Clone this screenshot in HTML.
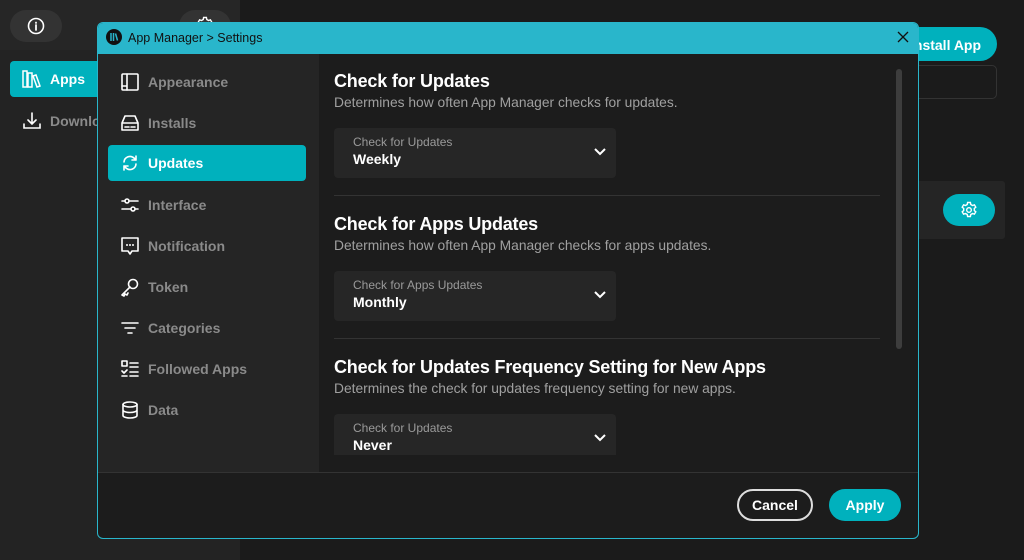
<!DOCTYPE html>
<html><head><style>
*{box-sizing:border-box;margin:0;padding:0}
body{width:1024px;height:560px;background:#1b1b1b;font-family:"Liberation Sans",sans-serif;position:relative;overflow:hidden;color:#fff}
.abs{position:absolute}
.nav{position:absolute;left:108px;width:198px;height:36px;display:flex;align-items:center;padding-left:12px;font-weight:bold;font-size:14px;color:#8a8a8a;border-radius:4px}
.nav svg{width:20px;height:20px;margin-right:8px;fill:none;stroke:#fff;stroke-width:1.6;stroke-linecap:round;stroke-linejoin:round}
.nav.act{background:#00b1bd;color:#fff}
h2{position:absolute;left:334px;font-size:18px;font-weight:bold;color:#fff;letter-spacing:-0.2px}
.desc{position:absolute;left:334px;font-size:13.8px;color:#a0a0a0}
.sel{position:absolute;left:334px;width:282px;height:50px;background:#262626;border-radius:4px}
.sel .l{position:absolute;left:19px;top:7px;font-size:12px;color:#9a9a9a}
.sel .v{position:absolute;left:19px;top:23px;font-size:14px;font-weight:bold;color:#fff}
.sel svg{position:absolute;right:10px;top:19px;width:12px;height:10px}
.hr{position:absolute;left:318px;width:562px;height:1px;background:#333}
</style></head><body>
<div class="abs" style="left:0;top:0;width:240px;height:560px;background:#232323"></div>
<div class="abs" style="left:0;top:0;width:240px;height:50px;background:#262626"></div>
<div class="abs" style="left:10px;top:10px;width:52px;height:32px;border-radius:16px;background:#333"></div>
<svg class="abs" style="left:27px;top:17px" width="18" height="18" viewBox="0 0 18 18"><circle cx="9" cy="9" r="7.5" fill="none" stroke="#fff" stroke-width="1.6"/><path d="M9 8v5M9 5.5v.5" stroke="#fff" stroke-width="1.8" stroke-linecap="round"/></svg>
<div class="abs" style="left:179px;top:10px;width:52px;height:32px;border-radius:16px;background:#333"></div>
<svg class="abs" style="left:196px;top:16px" width="18" height="18" viewBox="0 0 18 18" fill="none" stroke="#fff" stroke-width="1.4"><circle cx="9" cy="9" r="2.3"/><path d="M7.6 1.5h2.8l.4 2 1.7 1 1.9-.7 1.4 2.4-1.5 1.3v2l1.5 1.3-1.4 2.4-1.9-.7-1.7 1-.4 2H7.6l-.4-2-1.7-1-1.9.7-1.4-2.4 1.5-1.3v-2L2.2 6.2l1.4-2.4 1.9.7 1.7-1z"/></svg>
<div class="abs" style="left:10px;top:61px;width:225px;height:36px;border-radius:4px;background:#00b1bd"></div>
<div class="abs" style="left:50px;top:71px;font-size:14px;font-weight:bold">Apps</div>
<svg class="abs" style="left:22px;top:70px" width="20" height="18" viewBox="0 0 20 18" fill="none" stroke="#fff" stroke-width="1.5"><rect x="1" y="1" width="4" height="16"/><rect x="6" y="3" width="4" height="14"/><path d="M11 6l3-1 4 11-3 1z"/></svg>
<svg class="abs" style="left:22px;top:111px" width="20" height="20" viewBox="0 0 20 20" fill="none" stroke="#fff" stroke-width="1.6" stroke-linecap="round"><path d="M10 2v11M6 9l4 4 4-4M2 13v4h16v-4"/></svg>
<div class="abs" style="left:50px;top:113px;font-size:14px;font-weight:bold;color:#8a8a8a">Downloads</div>
<div class="abs" style="left:880px;top:27px;width:117px;height:34px;border-radius:17px;background:#00b1bd;color:#fff;font-weight:bold;font-size:14px;padding:10px 0 0 30px">Install App</div>
<div class="abs" style="left:900px;top:65px;width:97px;height:34px;border:1px solid #333;border-radius:5px"></div>
<div class="abs" style="left:900px;top:181px;width:105px;height:58px;background:#252525;border-radius:3px"></div>
<div class="abs" style="left:943px;top:194px;width:52px;height:32px;border-radius:16px;background:#00b1bd"></div>
<svg class="abs" style="left:960px;top:201px" width="18" height="18" viewBox="0 0 18 18" fill="none" stroke="#fff" stroke-width="1.4"><circle cx="9" cy="9" r="2.3"/><path d="M7.6 1.5h2.8l.4 2 1.7 1 1.9-.7 1.4 2.4-1.5 1.3v2l1.5 1.3-1.4 2.4-1.9-.7-1.7 1-.4 2H7.6l-.4-2-1.7-1-1.9.7-1.4-2.4 1.5-1.3v-2L2.2 6.2l1.4-2.4 1.9.7 1.7-1z"/></svg>

<div class="abs" style="left:97px;top:22px;width:822px;height:517px;border:1px solid #29b6cb;border-radius:6px;background:#1c1c1c;overflow:hidden">
<div class="abs" style="left:0;top:0;width:822px;height:31px;background:#29b6cb"></div>
<div class="abs" style="left:0;top:31px;width:221px;height:419px;background:#252525"></div>
<div class="abs" style="left:0;top:449px;width:822px;height:1px;background:#333"></div>
</div>
<svg class="abs" style="left:106px;top:29px" width="16" height="16" viewBox="0 0 16 16"><circle cx="8" cy="8" r="8" fill="#111"/><path d="M5 4v8M7.5 4v8M9.5 4.5l2 7" stroke="#29b6cb" stroke-width="1.5"/></svg>
<div class="abs" style="left:128px;top:31px;font-size:12.5px;color:#111">App Manager &gt; Settings</div>
<svg class="abs" style="left:897px;top:31px" width="12" height="12" viewBox="0 0 12 12" stroke="#111" stroke-width="1.3"><path d="M1 1l10 10M11 1L1 11"/></svg>

<div class="nav" style="top:64px"><svg viewBox="0 0 20 20"><rect x="2" y="2" width="16" height="16" rx="1"/><path d="M7 2v16M2 14h5"/></svg>Appearance</div>
<div class="nav" style="top:105px"><svg viewBox="0 0 20 20"><path d="M2 10l3-7h10l3 7v7H2zM2 10h16M5 14h4M11 14h4"/></svg>Installs</div>
<div class="nav act" style="top:145px"><svg viewBox="0 0 20 20"><path d="M4 9a6 6 0 0 1 10-4l2 2M16 3v4h-4M16 11a6 6 0 0 1-10 4l-2-2M4 17v-4h4"/></svg>Updates</div>
<div class="nav" style="top:187px"><svg viewBox="0 0 20 20"><path d="M2 6h16M2 14h16"/><circle cx="7" cy="6" r="2" fill="#252525"/><circle cx="13" cy="14" r="2" fill="#252525"/></svg>Interface</div>
<div class="nav" style="top:228px"><svg viewBox="0 0 20 20"><path d="M2 2h16v13h-6l-2 3-2-3H2z"/><path d="M7 9h0M10 9h0M13 9h0" stroke-width="2"/></svg>Notification</div>
<div class="nav" style="top:269px"><svg viewBox="0 0 20 20"><circle cx="13" cy="7" r="4.5"/><path d="M10 10l-8 8 2 1 1-2 2 1 1-2"/></svg>Token</div>
<div class="nav" style="top:310px"><svg viewBox="0 0 20 20"><path d="M2 5h16M5 10h10M8 15h4"/></svg>Categories</div>
<div class="nav" style="top:351px"><svg viewBox="0 0 20 20"><rect x="2" y="2" width="5" height="5"/><path d="M2 12l2 2 3-3M10 4h8M10 8h8M10 13h8M10 17h8M2 17h5"/></svg>Followed Apps</div>
<div class="nav" style="top:392px"><svg viewBox="0 0 20 20"><ellipse cx="10" cy="4.5" rx="7" ry="2.5"/><path d="M3 4.5v11c0 1.4 3 2.5 7 2.5s7-1.1 7-2.5v-11M3 10c0 1.4 3 2.5 7 2.5s7-1.1 7-2.5"/></svg>Data</div>

<div class="abs" style="left:896px;top:69px;width:6px;height:280px;border-radius:3px;background:#3d3d3d"></div>

<h2 style="top:71px">Check for Updates</h2>
<div class="desc" style="top:95px">Determines how often App Manager checks for updates.</div>
<div class="sel" style="top:128px"><div class="l">Check for Updates</div><div class="v">Weekly</div><svg viewBox="0 0 12 10"><path d="M1 2l5 5 5-5" fill="none" stroke="#fff" stroke-width="2"/></svg></div>
<div class="hr" style="top:195px;left:334px;width:546px"></div>
<h2 style="top:214px">Check for Apps Updates</h2>
<div class="desc" style="top:238px">Determines how often App Manager checks for apps updates.</div>
<div class="sel" style="top:271px"><div class="l">Check for Apps Updates</div><div class="v">Monthly</div><svg viewBox="0 0 12 10"><path d="M1 2l5 5 5-5" fill="none" stroke="#fff" stroke-width="2"/></svg></div>
<div class="hr" style="top:338px;left:334px;width:546px"></div>
<h2 style="top:357px">Check for Updates Frequency Setting for New Apps</h2>
<div class="desc" style="top:381px">Determines the check for updates frequency setting for new apps.</div>
<div class="sel" style="top:414px;height:41px;border-radius:4px 4px 0 0"><div class="l">Check for Updates</div><div class="v">Never</div><svg viewBox="0 0 12 10"><path d="M1 2l5 5 5-5" fill="none" stroke="#fff" stroke-width="2"/></svg></div>

<div class="abs" style="left:737px;top:489px;width:76px;height:32px;border:2px solid #ddd;border-radius:16px;font-size:14px;font-weight:bold;text-align:center;line-height:28px">Cancel</div>
<div class="abs" style="left:829px;top:489px;width:72px;height:32px;background:#00b1bd;border-radius:16px;font-size:14px;font-weight:bold;text-align:center;line-height:32px">Apply</div>
</body></html>
